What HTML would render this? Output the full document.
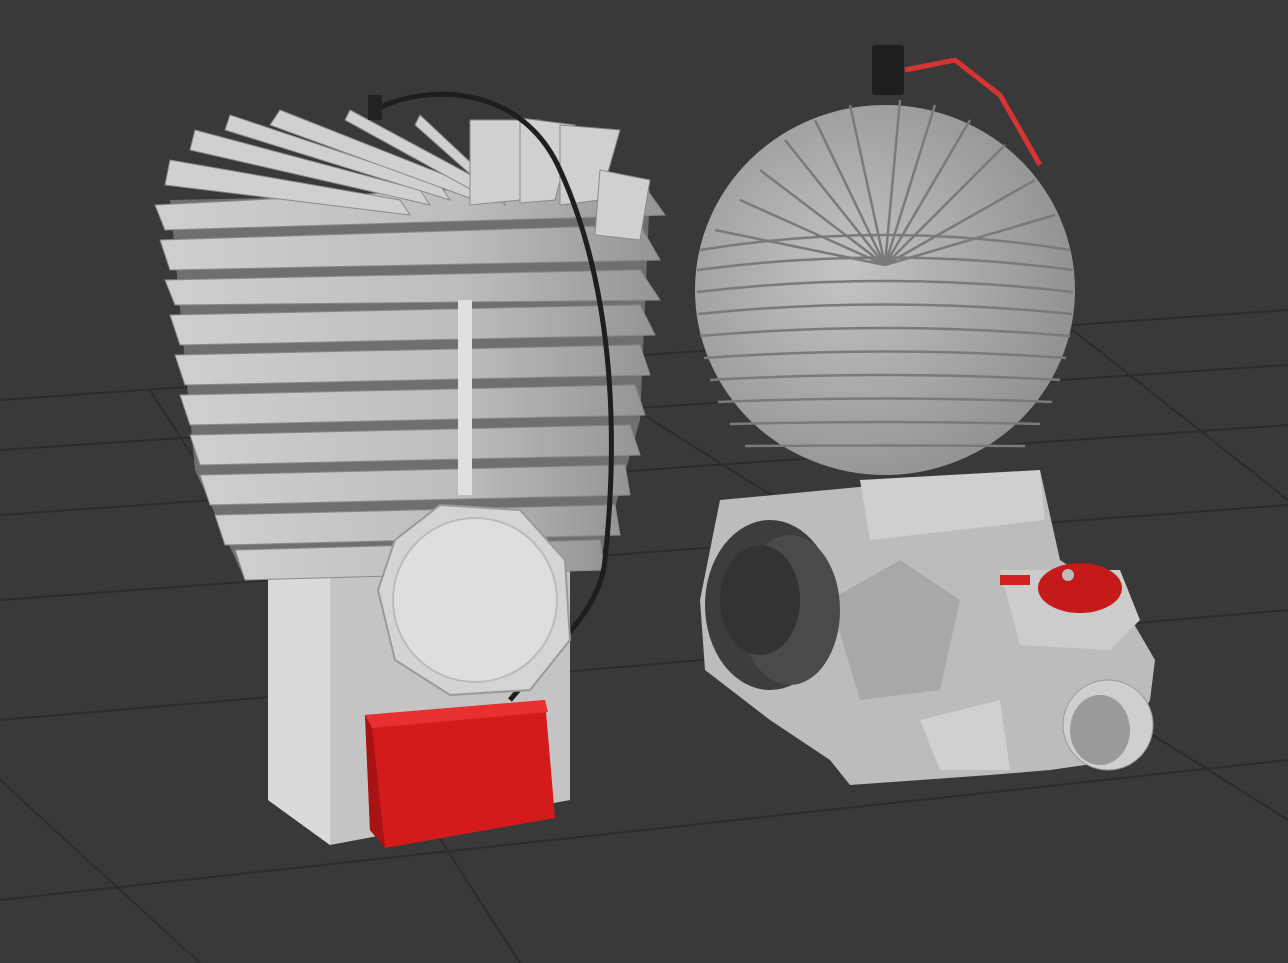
<!DOCTYPE html>
<html><head><meta charset="utf-8"><style>
html,body{margin:0;padding:0;background:#393939;overflow:hidden}
svg{display:block}
</style></head><body>
<svg width="1288" height="963" viewBox="0 0 1288 963" xmlns="http://www.w3.org/2000/svg">
<defs>
<linearGradient id="fin" x1="0" y1="0" x2="1" y2="0">
<stop offset="0" stop-color="#cfcfcf"/><stop offset="0.6" stop-color="#bdbdbd"/><stop offset="1" stop-color="#959595"/>
</linearGradient>
<radialGradient id="sph" cx="0.4" cy="0.45" r="0.7">
<stop offset="0" stop-color="#c4c4c4"/><stop offset="1" stop-color="#8a8a8a"/>
</radialGradient>
</defs>
<rect width="1288" height="963" fill="#393939"/>
<g stroke="#2c2c2c" stroke-width="2" fill="none">
<line x1="0" y1="400" x2="1288" y2="310"/>
<line x1="0" y1="450" x2="1288" y2="365"/>
<line x1="0" y1="515" x2="1288" y2="425"/>
<line x1="0" y1="600" x2="1288" y2="505"/>
<line x1="0" y1="720" x2="1288" y2="610"/>
<line x1="0" y1="900" x2="1288" y2="760"/>
<line x1="150" y1="390" x2="520" y2="963"/>
<line x1="620" y1="400" x2="1288" y2="820"/>
<line x1="1060" y1="320" x2="1288" y2="500"/>
<line x1="0" y1="780" x2="200" y2="963"/>
</g>
<!-- left engine base -->
<polygon points="268,560 570,560 570,800 330,845 268,800" fill="#c4c4c4"/>
<polygon points="268,560 330,560 330,845 268,800" fill="#dadada"/>
<!-- fins backing -->
<polygon points="170,200 650,190 640,420 600,560 245,580 195,470" fill="#6f6f6f"/>
<g fill="url(#fin)" stroke="#8a8a8a" stroke-width="1">
<polygon points="155,205 640,180 665,215 165,230"/>
<polygon points="160,240 640,225 660,260 170,270"/>
<polygon points="165,280 640,270 660,300 175,305"/>
<polygon points="170,315 640,305 655,335 180,345"/>
<polygon points="175,355 640,345 650,375 185,385"/>
<polygon points="180,395 635,385 645,415 190,425"/>
<polygon points="190,435 630,425 640,455 200,465"/>
<polygon points="200,475 625,465 630,495 210,505"/>
<polygon points="215,515 615,505 620,535 225,545"/>
<polygon points="235,550 600,540 605,570 245,580"/>
</g>
<g fill="#d0d0d0" stroke="#8a8a8a">
<polygon points="170,160 400,200 410,215 165,185"/>
<polygon points="195,130 420,190 430,205 190,150"/>
<polygon points="230,115 440,185 450,200 225,130"/>
<polygon points="280,110 470,185 475,200 270,125"/>
<polygon points="350,110 480,180 490,200 345,120"/>
<polygon points="420,115 500,190 505,205 415,125"/>
<polygon points="470,120 540,120 520,200 470,205"/>
<polygon points="520,118 575,125 555,200 520,203"/>
<polygon points="560,125 620,130 600,200 560,205"/>
<polygon points="600,170 650,180 640,240 595,235"/>
</g>
<rect x="458" y="300" width="14" height="195" fill="#e0e0e0"/>
<path d="M375,110 C 420,85 520,80 560,170 C 610,280 620,420 605,560 C 600,610 560,640 510,700" stroke="#1e1e1e" stroke-width="5" fill="none"/>
<rect x="368" y="95" width="14" height="25" fill="#222"/>
<polygon points="440,505 520,510 565,560 570,640 530,690 450,695 395,660 378,590 395,540" fill="#d4d4d4" stroke="#9a9a9a" stroke-width="2"/>
<circle cx="475" cy="600" r="82" fill="#dedede" stroke="#bbb" stroke-width="2"/>
<polygon points="365,715 545,700 555,818 385,848 370,830" fill="#d41a1a"/>
<polygon points="365,715 545,700 548,712 372,728" fill="#e83030"/>
<polygon points="365,715 372,728 385,848 370,830" fill="#a71212"/>
<!-- right engine lower body -->
<polygon points="720,500 1040,470 1060,560 1120,600 1155,660 1150,700 1120,760 1050,770 990,775 850,785 830,760 770,720 705,670 700,600" fill="#bcbcbc"/>
<polygon points="860,480 1040,470 1045,520 870,540" fill="#cfcfcf"/>
<polygon points="830,600 900,560 960,600 940,690 860,700" fill="#a8a8a8"/>
<polygon points="920,720 1000,700 1010,770 940,770" fill="#d0d0d0"/>
<polygon points="1000,570 1120,570 1140,620 1110,650 1020,645" fill="#cccccc"/>
<ellipse cx="1108" cy="725" rx="45" ry="45" fill="#cfcfcf" stroke="#999"/>
<ellipse cx="1100" cy="730" rx="30" ry="35" fill="#9a9a9a"/>
<ellipse cx="770" cy="605" rx="65" ry="85" fill="#3d3d3d"/>
<ellipse cx="790" cy="610" rx="50" ry="75" fill="#4a4a4a"/>
<ellipse cx="760" cy="600" rx="40" ry="55" fill="#333"/>
<ellipse cx="1080" cy="588" rx="42" ry="25" fill="#c41a1a"/>
<circle cx="1068" cy="575" r="6" fill="#bbb"/>
<rect x="1000" y="575" width="30" height="10" fill="#d32020"/>
<!-- sphere -->
<ellipse cx="885" cy="290" rx="190" ry="185" fill="url(#sph)"/>
<g stroke="#7a7a7a" stroke-width="2.5" fill="none">
<path d="M700,250 Q885,220 1070,250"/>
<path d="M697,270 Q885,245 1073,270"/>
<path d="M697,292 Q885,270 1073,292"/>
<path d="M698,314 Q885,295 1072,314"/>
<path d="M700,336 Q885,320 1070,336"/>
<path d="M704,358 Q885,345 1066,358"/>
<path d="M710,380 Q885,370 1060,380"/>
<path d="M718,402 Q885,395 1052,402"/>
<path d="M730,424 Q885,420 1040,424"/>
<path d="M745,446 Q885,445 1025,446"/>
<path d="M885,265 L740,200"/><path d="M885,265 L760,170"/><path d="M885,265 L785,140"/><path d="M885,265 L815,120"/><path d="M885,265 L850,105"/>
<path d="M885,265 L900,100"/><path d="M885,265 L935,105"/><path d="M885,265 L970,120"/><path d="M885,265 L1005,145"/>
<path d="M885,265 L1035,180"/><path d="M885,265 L1055,215"/><path d="M885,265 L715,230"/>
</g>
<path d="M905,70 L955,60 L1000,95 L1040,165" stroke="#d63333" stroke-width="5" fill="none"/>
<rect x="872" y="45" width="32" height="50" rx="3" fill="#1e1e1e"/>
</svg>
</body></html>
